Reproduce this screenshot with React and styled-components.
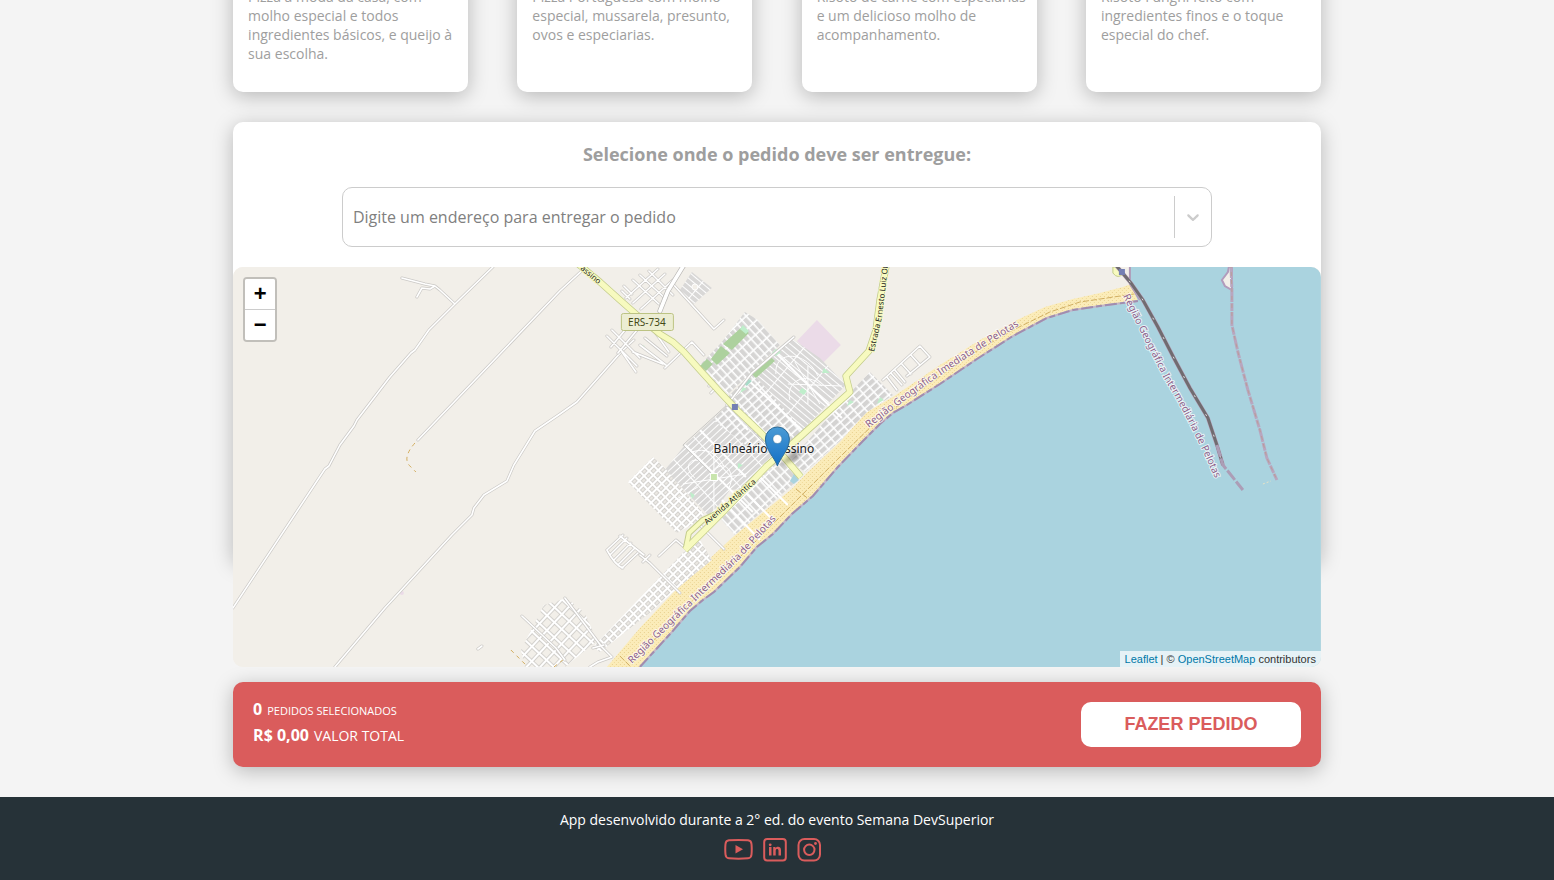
import React from "react";
import styled, { createGlobalStyle } from "styled-components";

const GlobalStyle = createGlobalStyle`
  * { box-sizing: border-box; }
  body {
    margin: 0;
    background: #f4f4f4;
    font-family: "Open Sans", "Noto Sans", sans-serif;
  }
`;

const Page = styled.div`
  display: flex;
  flex-direction: column;
  min-height: 100vh;
  overflow: hidden;
`;

const Main = styled.main`
  width: 70%;
  margin: 0 auto 30px;
`;

const Products = styled.section`
  display: flex;
  justify-content: space-between;
  margin-top: -28px;
`;

const ProductCard = styled.article`
  width: 235px;
  min-height: 120px;
  padding: 15px 10px 15px 15px;
  background: #fff;
  border-radius: 10px;
  box-shadow: 0 4px 20px rgba(0, 0, 0, 0.25);
`;

const ProductText = styled.p`
  margin: 0;
  font-size: 14px;
  line-height: 19px;
  color: #9e9e9e;
`;

const Delivery = styled.section`
  position: relative;
  z-index: 0;
  margin-top: 30px;
  padding-top: 20px;

  &::before {
    content: "";
    position: absolute;
    z-index: -1;
    inset: 0 0 105px;
    background: #fff;
    border-radius: 10px;
    box-shadow: 0 4px 20px rgba(0, 0, 0, 0.25);
  }
`;

const DeliveryTitle = styled.h3`
  margin: 0 0 20px;
  font-size: 18px;
  line-height: 25px;
  font-weight: 700;
  text-align: center;
  color: #9e9e9e;
`;

const AddressField = styled.div`
  display: flex;
  align-items: center;
  width: 80%;
  height: 60px;
  margin: 0 auto 20px;
  border: 1px solid #ccc;
  border-radius: 10px;
  background: #fff;
`;

const AddressInput = styled.input`
  flex: 1;
  min-width: 0;
  height: 100%;
  padding: 0 10px;
  border: 0;
  outline: 0;
  background: transparent;
  font: 16px "Open Sans", sans-serif;
  color: #333;

  &::placeholder {
    color: #808080;
    opacity: 1;
  }
`;

const OpenOptions = styled.button`
  display: flex;
  align-items: center;
  height: 42px;
  padding: 0 8px;
  border: 0;
  border-left: 1px solid #ccc;
  background: transparent;
  color: #ccc;
`;

const MapFrame = styled.div`
  position: relative;
  height: 400px;
  overflow: hidden;
  border-radius: 10px;
  background: #f2efe9;
`;

const MapDrawing = styled.svg`
  display: block;
  width: 100%;
  height: 100%;
  font-family: "Noto Sans", sans-serif;
`;

const ZoomControl = styled.div`
  position: absolute;
  top: 10px;
  left: 10px;
  display: flex;
  flex-direction: column;
  border: 2px solid rgba(0, 0, 0, 0.2);
  border-radius: 4px;
  background-clip: padding-box;
`;

const ZoomButton = styled.button`
  display: block;
  width: 30px;
  height: 30px;
  padding: 0;
  border: 0;
  border-radius: 0 0 2px 2px;
  background: #fff;
  font: 700 22px/30px "Liberation Sans", sans-serif;
  text-align: center;
  color: #000;

  &:first-child {
    height: 31px;
    border-bottom: 1px solid #ccc;
    border-radius: 2px 2px 0 0;
  }
`;

const Attribution = styled.div`
  position: absolute;
  right: 0;
  bottom: 0;
  padding: 0 5px;
  background: rgba(255, 255, 255, 0.7);
  font: 11px/16px "Liberation Sans", sans-serif;
  color: #333;
`;

const MapLink = styled.a`
  color: #0078a8;
  text-decoration: none;
`;

const Summary = styled.section`
  display: flex;
  align-items: flex-start;
  justify-content: space-between;
  margin-top: 15px;
  padding: 20px;
  border-radius: 10px;
  background: #da5c5c;
  box-shadow: 0 4px 20px rgba(0, 0, 0, 0.25);
`;

const Totals = styled.div`
  display: flex;
  flex-direction: column;
  gap: 10px;
  color: #fff;
`;

const TotalLine = styled.div`
  display: flex;
  align-items: baseline;
  gap: 5px;
  font-size: ${(p) => p.$size}px;
  line-height: 14px;
`;

const Amount = styled.strong`
  font-size: 16px;
  font-weight: 700;
`;

const OrderButton = styled.button`
  width: 220px;
  height: 45px;
  padding: 0;
  border: 0;
  border-radius: 10px;
  background: #fff;
  font: 700 18px "Liberation Sans", sans-serif;
  color: #da5c5c;
`;

const Footer = styled.footer`
  flex: 1;
  display: flex;
  flex-direction: column;
  align-items: center;
  padding: 13px 0 16px;
  background: #263238;
  font-size: 14px;
  line-height: 20px;
  color: #fff;
`;

const SocialLinks = styled.nav`
  display: flex;
  gap: 10px;
  margin-top: 8px;
  padding-right: 9px;
`;

const SocialLink = styled.a`
  display: flex;
  color: #da5c5c;
`;

const products = [
  "Pizza à moda da casa, com molho especial e todos ingredientes básicos, e queijo à sua escolha.",
  "Pizza Portuguesa com molho especial, mussarela, presunto, ovos e especiarias.",
  "Risoto de carne com especiarias e um delicioso molho de acompanhamento.",
  "Risoto Funghi feito com ingredientes finos e o toque especial do chef.",
];

const ruralRoads = [
  "M493 267L455 304L429 330L415 350L411 353L390 377L357 420L354 426L340 445L329 466L325 469L233 608",
  "M402 278L425 284L435 286L440 290L455 304",
  "M417 297L422 288L430 289L435 286",
  "M418 440L560 291L586 267",
  "M335 667L385 608L452 535L472 515L474 508L484 495L507 481L514 465L535 431L560 414L577 402L622 351L634 340",
  "M673 284L714 329L724 320",
  "M522 616L556 648L565 660",
  "M478 649l4 -3",
];

const minorRoads = [
  "M659 556L676 540L688 550M640 555L650 563L680 593M643 562L650 555M700 525L724 549",
  "M565 598L602 647L612 657L598 662L590 667M593 648L604 645",
  "M711 393L717 387M709 386L714 381M752 373L794 337M727 405L752 373",
  "M665 368L692 342L704 355",
  "M883 380L920 346L930 357L907 376M902 364l9 10M911 355l9 10M887 377l10 13M891 373l11 12M895 370l10 12",
  "M612 330l28 28M607 336l30 30M618 353l20-24M611 347l20-24M622 352l14 20M655 332l14 20M633 352l30 12M640 345l26 20M645 338l22 18",
  "M622 291l8 8M624 286l8 8M626 298l32-29M633 303l32-29M641 309l32-29M633 280l26 24M640 275l26 24M649 271l24 24",
  "M607 550l16-15M610 555l17-17M614 560l17-17M618 565l17-17M622 568l16-15M607 550q8 15 16 18M620 536l24 19",
];

const avenue = "M685 550L723 512L767 466L800 437L850 392L846 376L869 351L876 330L880 300L887 262";
const loop = "M686 548L689 533L703 520L720 512";
const highway = "M576 262L600 282L620 300L637 315L660 334L673 342L684 352L700 370L720 392L738 411L760 432L778 450L801 477";
const coast = "M640 667L672 632L690 611L703 600L714 592L740 567L757 547L773 534L792 514L813 496L838 467L863 441L880 424L893 413L907 405L940 384L977 359L1013 336L1047 318L1073 310L1100 306L1138 301";
const breakwater = "M1115 264L1131 283L1143 300L1158 327L1175 360L1190 388L1208 418L1217 445L1223 465";
const eastPier = "M1231 264L1232 290L1232 325L1238 352L1248 390L1260 430L1267 458L1277 480";

function RoadSet({ paths, casing, width }) {
  return (
    <g fill="none" strokeLinecap="round" strokeLinejoin="round">
      <path d={paths.join("")} stroke={casing} strokeWidth={width} />
      <path d={paths.join("")} stroke="#fff" strokeWidth={width - 1.4} />
    </g>
  );
}

function TownMap() {
  return (
    <MapDrawing viewBox="233 267 1088 400" preserveAspectRatio="xMidYMid slice" role="img" aria-label="Mapa de Balneário Cassino">
      <defs>
        <pattern id="blocks" width="9" height="6" patternUnits="userSpaceOnUse" patternTransform="rotate(-42)">
          <rect width="9" height="6" fill="#fff" />
          <rect x="1" y="1" width="7.400" height="4.400" fill="#d4d3d2" />
        </pattern>
        <pattern id="blocksTall" width="6" height="10" patternUnits="userSpaceOnUse" patternTransform="rotate(-43)">
          <rect width="6" height="10" fill="#fff" />
          <rect x="1" y="1" width="4.400" height="8.400" fill="#d6d5d4" />
        </pattern>
        <pattern id="rows" width="30" height="5" patternUnits="userSpaceOnUse" patternTransform="rotate(-43)">
          <rect width="30" height="5" fill="#fff" />
          <rect y="1" width="29" height="4" fill="#d9d8d7" />
        </pattern>
        <pattern id="rowsDown" width="30" height="5" patternUnits="userSpaceOnUse" patternTransform="rotate(40)">
          <rect width="30" height="5" fill="#fff" />
          <rect y="1" width="29" height="4" fill="#d9d8d7" />
        </pattern>
        <pattern id="light" width="7" height="6" patternUnits="userSpaceOnUse" patternTransform="rotate(-45)">
          <rect width="7" height="6" fill="#fff" />
          <rect x="1" y="1" width="5" height="4" fill="#d0cecb" />
          <rect x="1.800" y="1.800" width="3.400" height="2.400" fill="#ebe8e3" />
        </pattern>
        <pattern id="lightWide" width="11" height="10" patternUnits="userSpaceOnUse" patternTransform="rotate(-47)">
          <rect width="11" height="10" fill="#fff" />
          <rect x="1" y="1" width="9" height="8" fill="#c8c6c3" />
          <rect x="1.700" y="1.700" width="7.600" height="6.600" fill="#f2efe9" />
        </pattern>
        <pattern id="sand" width="4" height="4" patternUnits="userSpaceOnUse">
          <rect width="4" height="4" fill="#fbecb9" />
          <rect width="1" height="1" fill="#e8d090" />
          <rect x="2" y="2" width="1" height="1" fill="#efda9b" />
        </pattern>
        <linearGradient id="pinFill" x2="0" y2="1">
          <stop offset="0" stopColor="#4a9bd5" />
          <stop offset="1" stopColor="#126fc6" />
        </linearGradient>
        <filter id="soft" x="-30%" y="-30%" width="160%" height="160%">
          <feGaussianBlur stdDeviation="2" />
        </filter>
        <path id="labelSouth" d="M632 664L662 634L700 597L740 559L780 515" />
        <path id="labelEast" d="M869 428Q938 373 1022 324" />
        <path id="labelPier" d="M1123 296Q1147 345 1165 380Q1190 420 1218 485" />
        <path id="labelAvenue" d="M707 525L762 478" />
        <path id="labelRoad" d="M874 352L882 318L889 258" />
      </defs>

      <rect x="233" y="267" width="1088" height="400" fill="#f2efe9" />
      <path d={`${coast}L1130 285V267H1321V667Z`} fill="#aad3df" />
      <path
        d={`${coast}L1131 284L1123 287L1100 293L1073 299L1045 307L1017 320L980 340L940 365L893 397L867 412L840 442L807 473L793 488L733 537L673 593L640 628L607 667Z`}
        fill="url(#sand)"
      />
      <path d="M632 663L672 622L703 590L740 557L792 505L838 459L875 423L907 399L977 351L1013 330L1050 312L1080 302L1134 294M620 656L632 668M796 489L810 500" fill="none" stroke="#d0ae62" strokeWidth="1" strokeDasharray="6 2" />
      <path d={coast} fill="none" stroke="#c4b7c8" strokeWidth="2" />
      <path d={coast} fill="none" stroke="#a08daf" strokeWidth="2" strokeDasharray="12 3 6 3" />
      <path d="M1130 267V284L1140 300" fill="none" stroke="#b09ab8" strokeWidth="2" />

      <path d="M797 341L817 320L841 345L822 364Z" fill="#ebdbe8" />

      <path d="M685 445L727 406L777 454L742 489L730 490L710 517L665 470Z" fill="url(#rows)" />
      <path d="M727 406L738 410L777 450L759 455L713 420Z" fill="url(#blocks)" />
      <path d="M653 457L628 482L677 533L700 520L704 514L665 468Z" fill="url(#light)" />
      <path d="M700 365L722 342L745 312L758 320L780 345L752 372L728 394Z" fill="url(#blocksTall)" />
      <path d="M728 397L752 372L805 432L780 453Z" fill="url(#blocks)" />
      <path d="M752 372L791 338L820 358L846 385L803 430Z" fill="url(#rowsDown)" />
      <path d="M850 393L870 372L893 395L866 413L840 441L805 472L790 461Z" fill="url(#blocks)" />
      <path d="M770 469L778 460L805 474L735 535L720 518Z" fill="url(#blocksTall)" />
      <path d="M683 553L700 540L712 560L673 592L652 611L600 652L593 647Z" fill="url(#light)" />
      <path d="M544 605L567 598L585 613L597 641L565 667H525L521 650Z" fill="url(#lightWide)" />
      <path d="M692 272L680 290L694 304L712 288Z" fill="url(#rowsDown)" />

      <g fill="none" stroke="#fff" strokeWidth="2">
        <path d="M685 445L753 512M700 430L746 477M727 407L748 430M745 377L802 430M775 352L842 418" />
        <path d="M722 500L760 540M740 487L773 520M756 473L788 505" />
      </g>
      <g fill="none" stroke="#fff" strokeWidth="1">
        <path d="M776 374C774 350 806 350 818 376M790 400C785 382 806 370 822 386M788 384L842 386M808 366V404M795 362L820 404" />
        <path d="M695 478C680 466 694 452 706 466M710 478C720 454 738 470 729 488M683 484L746 474M714 447V512M675 500L698 487M692 452Q712 445 724 466" />
      </g>
      <path d="M683 445L727 405L775 454M683 445L712 474" fill="none" stroke="#c8c7c5" strokeWidth="1" />
      <circle cx="695" cy="287" r="3" fill="#f2efe9" stroke="#fff" />

      <g fill="#add19e">
        <path d="M742 327L749 333L732 350L723 344ZM721 346L730 353L717 365L711 359ZM707 359L713 364L706 371L700 366Z" />
        <path d="M771 357L775 361L756 378L752 374Z" />
      </g>
      <path d="M743 325l6 6l-3 3l-6-5ZM776 349l5 3l-5 4l-4-3ZM743 387l4 2l-7 4ZM802 388l5 3l-3 4l-5-3ZM690 492l5 3l-3 4ZM738 463l5 2l-5 4ZM824 368l6 5h-8ZM880 397l4 3l-7 4ZM850 400l4 2l-7 4ZM642 345l3 1l-2 2Z" fill="#bfeecb" />
      <path d="M747 378l5 3l-5 5l-4-3Z" fill="#a8dbc9" />
      <rect x="710.500" y="473.500" width="7" height="7" fill="#c8e5ad" stroke="#fff" />
      <path d="M794 474l5 6l-5 4l-4-3Z" fill="#aad3df" />
      <circle cx="402" cy="593" r="2" fill="#ebdbe8" />

      <RoadSet paths={ruralRoads} casing="#cbc9c6" width={3} />
      <RoadSet paths={minorRoads} casing="#cbc9c6" width={3} />
      <RoadSet paths={["M684 265L676 278L668 291L660 311"]} casing="#b9b7b4" width={5} />
      <g fill="none" stroke="#d2ad5f" strokeWidth="1" strokeDasharray="4 4">
        <path d="M415 443Q402 458 410 466L416 472M511 650L528 667M554 667L563 660" />
      </g>

      <g fill="none" strokeLinejoin="round">
        <g stroke="#c3cc8b" strokeWidth="7">
          <path d={highway} />
          <path d={avenue} />
          <path d={loop} strokeWidth="6" />
        </g>
        <g stroke="#f7fabf" strokeWidth="5.500">
          <path d={highway} />
          <path d={avenue} />
          <path d={loop} strokeWidth="4" />
        </g>
      </g>

      <path d="M1113 267V273Q1118 280 1124 273L1119 267Z" fill="#f7fabf" stroke="#c3cc8b" />
      <path d={breakwater} fill="none" stroke="#b8a5be" strokeWidth="4" />
      <path d={breakwater} fill="none" stroke="#706c70" strokeWidth="3" />
      <path d={breakwater} fill="none" stroke="#e4dddf" strokeWidth="1" strokeDasharray="2 20" />
      <path d="M1217 445L1223 465L1243 490" fill="none" stroke="#ac9db6" strokeWidth="3" strokeDasharray="12 2" />
      <path d="M1229 267L1228 272L1222 280L1225 286L1232 290V267Z" fill="#f2efe9" stroke="#b29cbc" strokeWidth="2" />
      <path d={eastPier} fill="none" stroke="#b8a6bf" strokeWidth="3" strokeDasharray="14 1 8 1" />
      <path d={eastPier} fill="none" stroke="#ba9d98" strokeWidth="1" strokeDasharray="4 4" />
      <path d="M1263 484l8-3" stroke="#e9e3c5" strokeDasharray="2 2" />
      <g fill="#747fb3">
        <rect x="732" y="404" width="6" height="6" />
        <rect x="1119" y="269" width="6" height="6" />
      </g>

      <rect x="621.500" y="313.500" width="52" height="17" rx="2" fill="#ecedd3" stroke="#bcc383" />
      <text x="647" y="326" textAnchor="middle" fontSize="10" fill="#444a16">ERS-734</text>

      <g fill="#8d618b" stroke="#fff" strokeOpacity="0.7" strokeWidth="2" paintOrder="stroke" fontSize="10">
        <text><textPath href="#labelSouth">Região Geográfica Intermediária de Pelotas</textPath></text>
        <text><textPath href="#labelEast">Região Geográfica Imediata de Pelotas</textPath></text>
        <text><textPath href="#labelPier">Região Geográfica Intermediária de Pelotas</textPath></text>
      </g>
      <g fill="#222" stroke="#f7fabf" strokeWidth="2" paintOrder="stroke" fontSize="8">
        <text><textPath href="#labelAvenue">Avenida Atlântica</textPath></text>
        <text><textPath href="#labelRoad">Estrada Ernesto Luiz Otero</textPath></text>
        <text x="580" y="269" transform="rotate(40 580 269)">assino</text>
      </g>
      <text x="764" y="453" textAnchor="middle" fontSize="12" fill="#222" stroke="#fff" strokeOpacity="0.6" strokeWidth="2" paintOrder="stroke">
        Balneário Cassino
      </text>

      <path d="M779 466L796 449L800 457Z" fill="#000" opacity="0.35" filter="url(#soft)" />
      <path d="M777.5 466C775 458 765.500 450 765.500 439A12 12 0 0 1 789.500 439C789.500 450 780 458 777.500 466Z" fill="url(#pinFill)" stroke="#2e6c97" />
      <circle cx="777.500" cy="439" r="4.500" fill="#fff" stroke="#2e6c97" strokeWidth="0.500" />
    </MapDrawing>
  );
}

function YouTubeIcon() {
  return (
    <svg width="29" height="24" viewBox="0 0 29 24" fill="none" aria-hidden="true">
      <path d="M5 2.300Q14.500 1.500 24 2.300Q27.200 2.600 27.500 6Q28 11.500 27.500 16.500Q27.200 20 24 20.300Q14.500 21.200 5 20.300Q1.800 20 1.500 16.500Q1 11.500 1.500 6Q1.800 2.600 5 2.300Z" stroke="currentColor" strokeWidth="2" />
      <path d="M11.500 7L19 11.200L11.500 15.400Z" fill="currentColor" />
    </svg>
  );
}

function LinkedInIcon() {
  return (
    <svg width="24" height="24" viewBox="0 0 24 24" fill="none" aria-hidden="true">
      <rect x="1.200" y="1" width="21.600" height="21.600" rx="3" stroke="currentColor" strokeWidth="2" />
      <path d="M6 9H8.500V17.500H6ZM10.200 9H12.500V10.200C14 8 18 8.300 18 12V17.500H15.500V12.800C15.500 10.300 12.700 10.300 12.700 12.800V17.500H10.200Z" fill="currentColor" />
      <circle cx="7.200" cy="6.800" r="1.400" fill="currentColor" />
    </svg>
  );
}

function InstagramIcon() {
  return (
    <svg width="24" height="24" viewBox="0 0 24 24" fill="none" stroke="currentColor" strokeWidth="2" aria-hidden="true">
      <rect x="1.500" y="1" width="21.500" height="21.600" rx="6" />
      <circle cx="12.300" cy="11.800" r="5.200" />
      <circle cx="18.500" cy="5.500" r="1.400" fill="currentColor" stroke="none" />
    </svg>
  );
}

export default function App() {
  return (
    <Page>
      <GlobalStyle />
      <Main>
        <Products>
          {products.map((text) => (
            <ProductCard key={text}>
              <ProductText>{text}</ProductText>
            </ProductCard>
          ))}
        </Products>

        <Delivery>
          <DeliveryTitle id="address-title">Selecione onde o pedido deve ser entregue:</DeliveryTitle>
          <AddressField>
            <AddressInput type="text" aria-labelledby="address-title" placeholder="Digite um endereço para entregar o pedido" />
            <OpenOptions type="button" aria-label="Abrir opções">
              <svg width="20" height="20" viewBox="0 0 20 20" fill="currentColor" aria-hidden="true">
                <path d="M4.516 7.548c0.436-0.446 1.043-0.481 1.576 0l3.908 3.747 3.908-3.747c0.533-0.481 1.141-0.446 1.574 0 0.436 0.445 0.408 1.197 0 1.615-0.406 0.418-4.695 4.502-4.695 4.502-0.217 0.223-0.502 0.335-0.787 0.335s-0.570-0.112-0.789-0.335c0 0-4.287-4.084-4.695-4.502s-0.436-1.170 0-1.615z" />
              </svg>
            </OpenOptions>
          </AddressField>
          <MapFrame>
            <TownMap />
            <ZoomControl>
              <ZoomButton type="button" aria-label="Aproximar">+</ZoomButton>
              <ZoomButton type="button" aria-label="Afastar">−</ZoomButton>
            </ZoomControl>
            <Attribution>
              <MapLink href="#leaflet">Leaflet</MapLink> | © <MapLink href="#openstreetmap">OpenStreetMap</MapLink> contributors
            </Attribution>
          </MapFrame>
        </Delivery>

        <Summary>
          <Totals>
            <TotalLine $size={11}><Amount>0</Amount>PEDIDOS SELECIONADOS</TotalLine>
            <TotalLine $size={14}><Amount>R$ 0,00</Amount>VALOR TOTAL</TotalLine>
          </Totals>
          <OrderButton type="button">FAZER PEDIDO</OrderButton>
        </Summary>
      </Main>

      <Footer>
        App desenvolvido durante a 2° ed. do evento Semana DevSuperior
        <SocialLinks aria-label="Redes sociais">
          <SocialLink href="#youtube" aria-label="YouTube"><YouTubeIcon /></SocialLink>
          <SocialLink href="#linkedin" aria-label="LinkedIn"><LinkedInIcon /></SocialLink>
          <SocialLink href="#instagram" aria-label="Instagram"><InstagramIcon /></SocialLink>
        </SocialLinks>
      </Footer>
    </Page>
  );
}
